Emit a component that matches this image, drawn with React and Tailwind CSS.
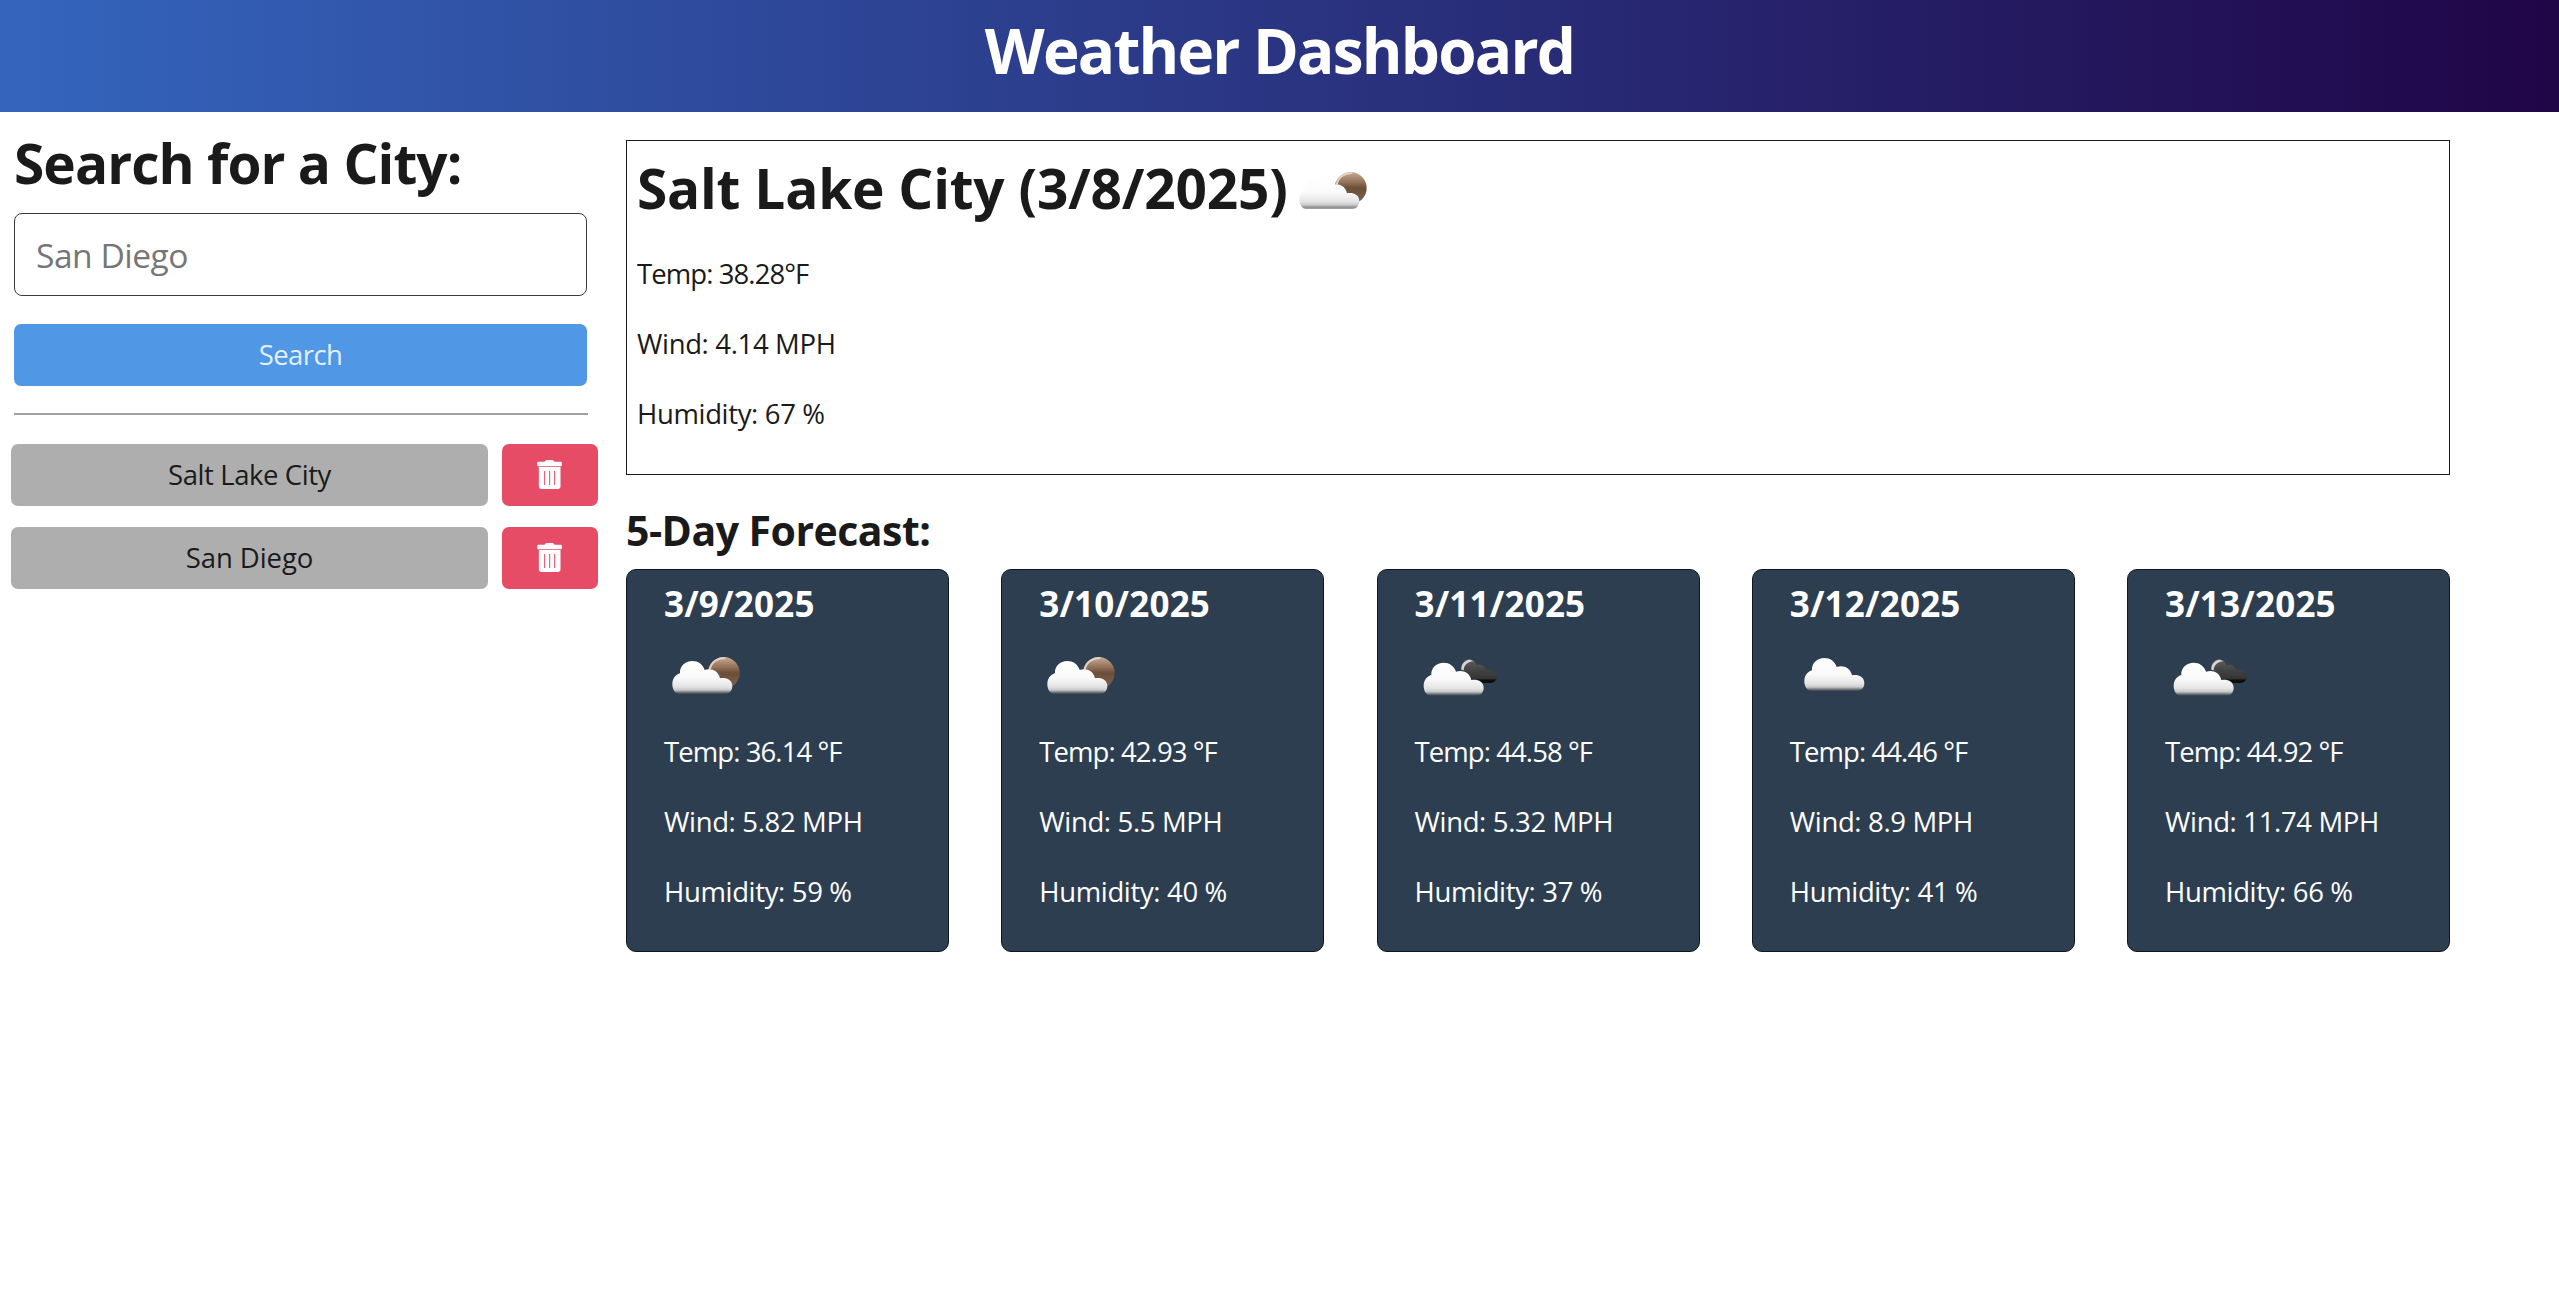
const CLOUD =
  'M58 165 C45 165 37 151 37 135 C37 119 47 107 60 103 C58 82 76 66 97 66 C114 66 129 76 134 93 C152 86 176 95 180 118 C198 115 217 122 217 141 C217 155 208 165 196 165 Z';

// Gradients and glow shared by all of the weather icons.
function Shading({ id }) {
  return (
    <defs>
      <linearGradient id={`${id}-cloud`} x1="0" y1="0" x2="0" y2="1">
        <stop offset="0" stopColor="#ffffff" />
        <stop offset="0.5" stopColor="#fafafa" />
        <stop offset="0.78" stopColor="#e4e4e4" />
        <stop offset="0.88" stopColor="#c9c9c9" />
        <stop offset="0.94" stopColor="#8a8a8a" stopOpacity="0.9" />
        <stop offset="1" stopColor="#505050" stopOpacity="0.5" />
      </linearGradient>
      <linearGradient id={`${id}-sun`} x1="0" y1="0" x2="0" y2="1">
        <stop offset="0" stopColor="#c9ab95" />
        <stop offset="0.35" stopColor="#8c6b54" />
        <stop offset="0.5" stopColor="#6b4e39" />
        <stop offset="1" stopColor="#7d6450" />
      </linearGradient>
      <linearGradient id={`${id}-dark`} x1="0" y1="0" x2="0" y2="1">
        <stop offset="0" stopColor="#606060" />
        <stop offset="0.45" stopColor="#434343" />
        <stop offset="0.8" stopColor="#353535" />
        <stop offset="0.88" stopColor="#111111" />
        <stop offset="1" stopColor="#111111" />
      </linearGradient>
      <filter id={`${id}-soft`} x="-10%" y="-10%" width="120%" height="120%">
        <feGaussianBlur stdDeviation="2.2" />
      </filter>
    </defs>
  );
}

function WeatherIcon({ kind, id, className = '' }) {
  return (
    <svg viewBox="12 -24 264 264" className={`size-[88px] shrink-0 ${className}`} aria-hidden="true">
      <Shading id={id} />
      <g filter={`url(#${id}-soft)`}>
        {kind === 'few' && (
          <>
            <circle cx="191" cy="102" r="48" fill={`url(#${id}-sun)`} />
            <path d="M149 92 C154 68 174 56 196 57" fill="none" stroke="#e3d2c5" strokeWidth="6" />
            <path d={CLOUD} fill={`url(#${id}-cloud)`} />
          </>
        )}
        {kind === 'broken' && (
          <>
            <path
              d="M152 100 C144 78 158 61 174 61 C187 61 193 69 197 79 C211 74 222 82 225 93 C240 89 258 96 258 111 C258 124 248 132 238 132 L190 132 Z"
              fill={`url(#${id}-dark)`}
            />
            <path d="M151 92 C150 76 161 63 176 62 L188 67 C173 66 159 77 158 94 Z" fill="#d6d6d6" />
            <g transform="translate(1 5)">
              <path d={CLOUD} fill={`url(#${id}-cloud)`} />
            </g>
          </>
        )}
        {kind === 'scattered' && (
          <g transform="translate(18 -9)">
            <path d={CLOUD} fill={`url(#${id}-cloud)`} />
          </g>
        )}
      </g>
    </svg>
  );
}

function TrashIcon() {
  return (
    <svg viewBox="0 0 74 87" className="mr-[1px] mb-[2px] h-[29px] w-[25px] fill-white" aria-hidden="true">
      <path d="M3 5 H22 L25 1.5 Q26 0 29 0 H45 Q48 0 49 1.5 L52 5 H71 Q74 5 74 8 V16 Q74 19 71 19 H3 Q0 19 0 16 V8 Q0 5 3 5 Z" />
      <path
        fillRule="evenodd"
        d="M5 21 H70 V79 Q70 87 62 87 H13 Q5 87 5 79 Z M21 33 V75 H24 V33 Z M36 33 V75 H39 V33 Z M51 33 V75 H54 V33 Z"
      />
    </svg>
  );
}

const history = [
  { name: 'Salt Lake City', tracking: 'tracking-[-0.42px]' },
  { name: 'San Diego', tracking: 'tracking-[-0.08px]' },
];

const forecast = [
  { date: '3/9/2025', icon: 'few', temp: '36.14', wind: '5.82', humidity: 59 },
  { date: '3/10/2025', icon: 'few', temp: '42.93', wind: '5.5', humidity: 40 },
  { date: '3/11/2025', icon: 'broken', temp: '44.58', wind: '5.32', humidity: 37 },
  { date: '3/12/2025', icon: 'scattered', temp: '44.46', wind: '8.9', humidity: 41 },
  { date: '3/13/2025', icon: 'broken', temp: '44.92', wind: '11.74', humidity: 66 },
];

function Readings({ temp, wind, humidity }) {
  return (
    <div className="flex flex-col gap-7 text-[27.5px] leading-[42px] whitespace-nowrap">
      <p className="tracking-[-0.92px]">Temp: {temp}</p>
      <p className="tracking-[-0.35px]">Wind: {wind} MPH</p>
      <p className="tracking-[-0.35px]">Humidity: {humidity} %</p>
    </div>
  );
}

function ForecastCard({ day, id }) {
  return (
    <article className="h-[383px] w-[323px] rounded-[10px] border border-[#10161d] bg-[#2d3e50] pt-[9px] pl-[37px] text-white">
      <h4 className="text-[35px] leading-[49px] font-bold tracking-[0.2px]">{day.date}</h4>
      <WeatherIcon kind={day.icon} id={id} className="mt-[3px] mb-3" />
      <Readings temp={`${day.temp} °F`} wind={day.wind} humidity={day.humidity} />
    </article>
  );
}

export default function App() {
  return (
    <div className="min-h-screen bg-white font-['Open_Sans','Noto_Sans',sans-serif] text-[#1a1a1a]">
      <header className="h-28 bg-[linear-gradient(90deg,#3465bd,#200547)]">
        <h1 className="text-center text-[62px] leading-[100px] font-bold tracking-[-1.8px] text-white">
          Weather Dashboard
        </h1>
      </header>

      <div className="flex">
        <aside className="w-[626px] shrink-0 pt-4 pl-[11px]">
          <form className="flex w-[577px] flex-col pl-[3px]">
            <h2 className="text-[55px] leading-[70px] font-bold tracking-[-0.95px] whitespace-nowrap">
              Search for a City:
            </h2>
            <input
              type="text"
              placeholder="San Diego"
              className="mt-[15px] h-[83px] w-[573px] rounded-[8px] border border-[#3c3c3c] bg-white pl-[21px] text-[33.6px] tracking-[-0.5px] placeholder:text-[#767676]"
            />
            <button
              type="button"
              className="mt-7 h-[62px] w-[573px] rounded-[7px] bg-[#5097e6] text-[27.5px] tracking-[-0.6px] text-[#e3effb]"
            >
              Search
            </button>
            <hr className="mt-[27px] mb-[1px] h-[2px] border-0 bg-[#a0a0a0]" />
          </form>

          <ul className="mt-7 flex flex-col gap-[21px]">
            {history.map((city) => (
              <li key={city.name} className="flex gap-[14px]">
                <button
                  type="button"
                  className={`h-[62px] w-[477px] rounded-[7px] bg-[#aeaeae] text-[27.5px] ${city.tracking}`}
                >
                  {city.name}
                </button>
                <button
                  type="button"
                  aria-label={`Remove ${city.name}`}
                  className="flex h-[62px] w-24 items-center justify-center rounded-[7px] bg-[#e64c66]"
                >
                  <TrashIcon />
                </button>
              </li>
            ))}
          </ul>
        </aside>

        <main className="w-[1824px] pt-7">
          <section className="h-[335px] border border-[#1a1a1a] pt-[14px] pl-[10px]">
            <div className="mb-8 flex h-[66px] items-start">
              <h2 className="text-[55px] leading-[66px] font-bold tracking-[-0.23px] whitespace-nowrap">
                Salt Lake City (3/8/2025)
              </h2>
              <WeatherIcon kind="few" id="today" className="-mt-[9px] ml-[3px]" />
            </div>
            <Readings temp="38.28°F" wind="4.14" humidity={67} />
          </section>

          <h3 className="mt-[30px] mb-[14px] text-[41px] leading-[50px] font-bold tracking-[-0.52px]">
            5-Day Forecast:
          </h3>
          <div className="flex justify-between">
            {forecast.map((day, i) => (
              <ForecastCard key={day.date} day={day} id={`day${i}`} />
            ))}
          </div>
        </main>
      </div>
    </div>
  );
}
